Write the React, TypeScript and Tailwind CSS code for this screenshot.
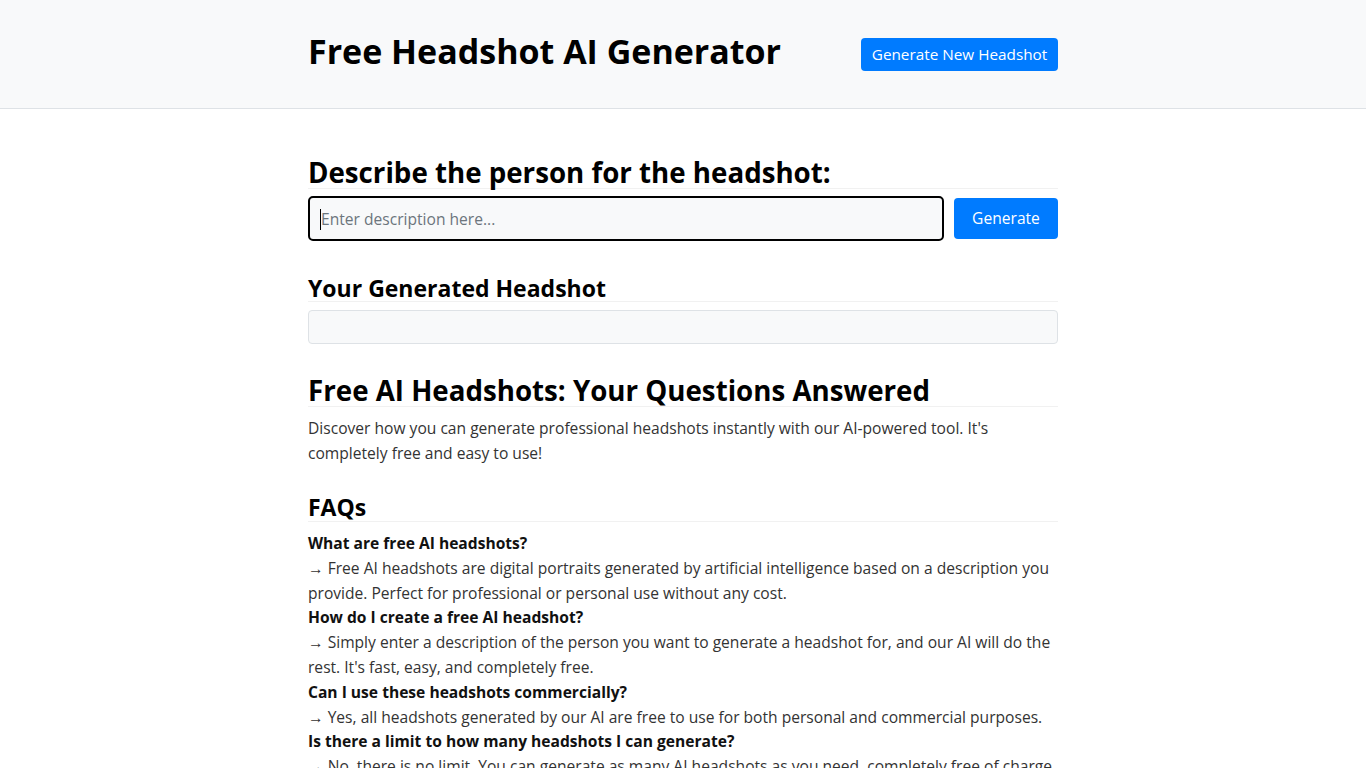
const faqs = [
  {
    q: "What are free AI headshots?",
    a: "→ Free AI headshots are digital portraits generated by artificial intelligence based on a description you provide. Perfect for professional or personal use without any cost.",
  },
  {
    q: "How do I create a free AI headshot?",
    a: "→ Simply enter a description of the person you want to generate a headshot for, and our AI will do the rest. It's fast, easy, and completely free.",
  },
  {
    q: "Can I use these headshots commercially?",
    a: "→ Yes, all headshots generated by our AI are free to use for both personal and commercial purposes.",
  },
  {
    q: "Is there a limit to how many headshots I can generate?",
    a: "→ No, there is no limit. You can generate as many AI headshots as you need, completely free of charge.",
  },
];

export default function App() {
  return (
    <div className="min-h-screen bg-white text-[#212529]" style={{ fontFamily: '"Open Sans", "Noto Sans", sans-serif' }}>
      <header className="h-[109px] bg-[#f8f9fa] border-b border-[#dee2e6]">
        <div className="w-[750px] mx-auto h-full flex items-center justify-between">
          <h1 className="text-[34px] font-bold text-black leading-none mt-[-6px]">Free Headshot AI Generator</h1>
          <button className="h-[33px] w-[197px] bg-[#007bff] text-white text-[15.3px] rounded-[4px] mt-[1px]">
            Generate New Headshot
          </button>
        </div>
      </header>

      <main className="w-[750px] mx-auto pt-[47px]">
        <h2 className="text-[27.7px] font-bold text-black leading-[32px] border-b border-[#f1f1f1]">
          Describe the person for the headshot:
        </h2>
        <div className="flex gap-[10px] mt-[7px] items-center">
          <div className="w-[636px] h-[45px] border-2 border-black rounded-[5px] bg-[#f8f9fa] flex items-center pl-[10px] pt-[2px]">
            <span className="w-px h-[21px] bg-black"></span>
            <span className="text-[15.6px] text-[#6c757d]">Enter description here...</span>
          </div>
          <button className="w-[104px] h-[41px] bg-[#007bff] text-white text-[15.6px] rounded-[4px] pt-px">Generate</button>
        </div>

        <h3 className="mt-[34px] text-[23px] font-bold text-black leading-[26px] border-b border-[#f1f1f1]">
          Your Generated Headshot
        </h3>
        <div className="mt-[8px] h-[34px] bg-[#f8f9fa] border border-[#dee2e6] rounded-[4px]"></div>

        <h2 className="mt-[30px] text-[27.7px] font-bold text-black leading-[32px] border-b border-[#f1f1f1]">
          Free AI Headshots: Your Questions Answered
        </h2>
        <p className="mt-[9px] text-[15.6px] leading-[25px] text-[#333]">
          Discover how you can generate professional headshots instantly with our AI-powered tool. It's completely free and easy to use!
        </p>

        <h3 className="mt-[27px] text-[23px] font-bold text-black leading-[28px] border-b border-[#f1f1f1]">
          FAQs
        </h3>
        <div className="mt-[9px] text-[15.6px] leading-[24.8px] text-[#333]">
          {faqs.map((f) => (
            <div key={f.q}>
              <div className="font-bold text-[#111]">{f.q}</div>
              <div>{f.a}</div>
            </div>
          ))}
        </div>
      </main>
    </div>
  );
}
